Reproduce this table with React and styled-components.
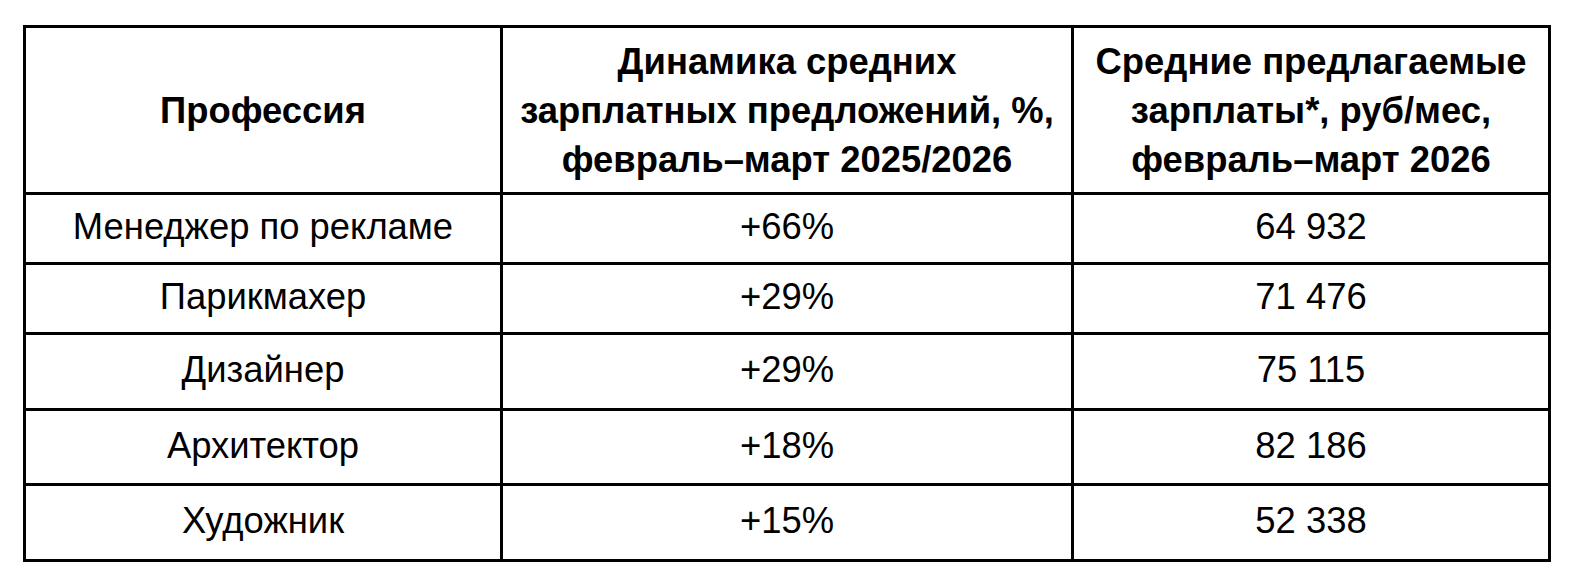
import React from 'react'
import styled, { createGlobalStyle } from 'styled-components'

const GlobalStyle = createGlobalStyle`
  html, body {
    margin: 0;
    padding: 0;
    background: #ffffff;
  }
  body {
    font-family: "Liberation Sans", Arial, sans-serif;
    color: #000000;
  }
`

const Page = styled.div`
  padding: 25px 23px;
  width: 1574px;
  box-sizing: border-box;
`

const Grid = styled.div`
  display: grid;
  grid-template-columns: 474px 568px 474px;
  grid-template-rows: 164px 67px 67px 73px 72px 73px;
  gap: 3px;
  padding: 3px;
  background: #000000;
  width: 1528px;
  box-sizing: border-box;
`

const Cell = styled.div`
  background: #ffffff;
  display: flex;
  align-items: center;
  justify-content: center;
  text-align: center;
  font-size: 36.4px;
  font-weight: ${p => (p.head ? 700 : 400)};
  line-height: ${p => (p.head ? '49px' : '40px')};
  padding-bottom: ${p => (p.head ? '0' : '3px')};
  white-space: nowrap;
  color: #000000;
`

const headers = [
  ['Профессия'],
  ['Динамика средних', 'зарплатных предложений, %,', 'февраль–март 2025/2026'],
  ['Средние предлагаемые', 'зарплаты*, руб/мес,', 'февраль–март 2026'],
]

const rows = [
  ['Менеджер по рекламе', '+66%', '64 932'],
  ['Парикмахер', '+29%', '71 476'],
  ['Дизайнер', '+29%', '75 115'],
  ['Архитектор', '+18%', '82 186'],
  ['Художник', '+15%', '52 338'],
]

const App = () => {
  return (
    <>
      <GlobalStyle />
      <Page>
        <Grid>
          {headers.map((lines, i) => (
            <Cell head key={'h' + i}>
              <div>
                {lines.map((l, j) => (
                  <div key={j}>{l}</div>
                ))}
              </div>
            </Cell>
          ))}
          {rows.map((r, i) =>
            r.map((v, j) => <Cell key={i + '-' + j}>{v}</Cell>)
          )}
        </Grid>
      </Page>
    </>
  )
}

export default App
